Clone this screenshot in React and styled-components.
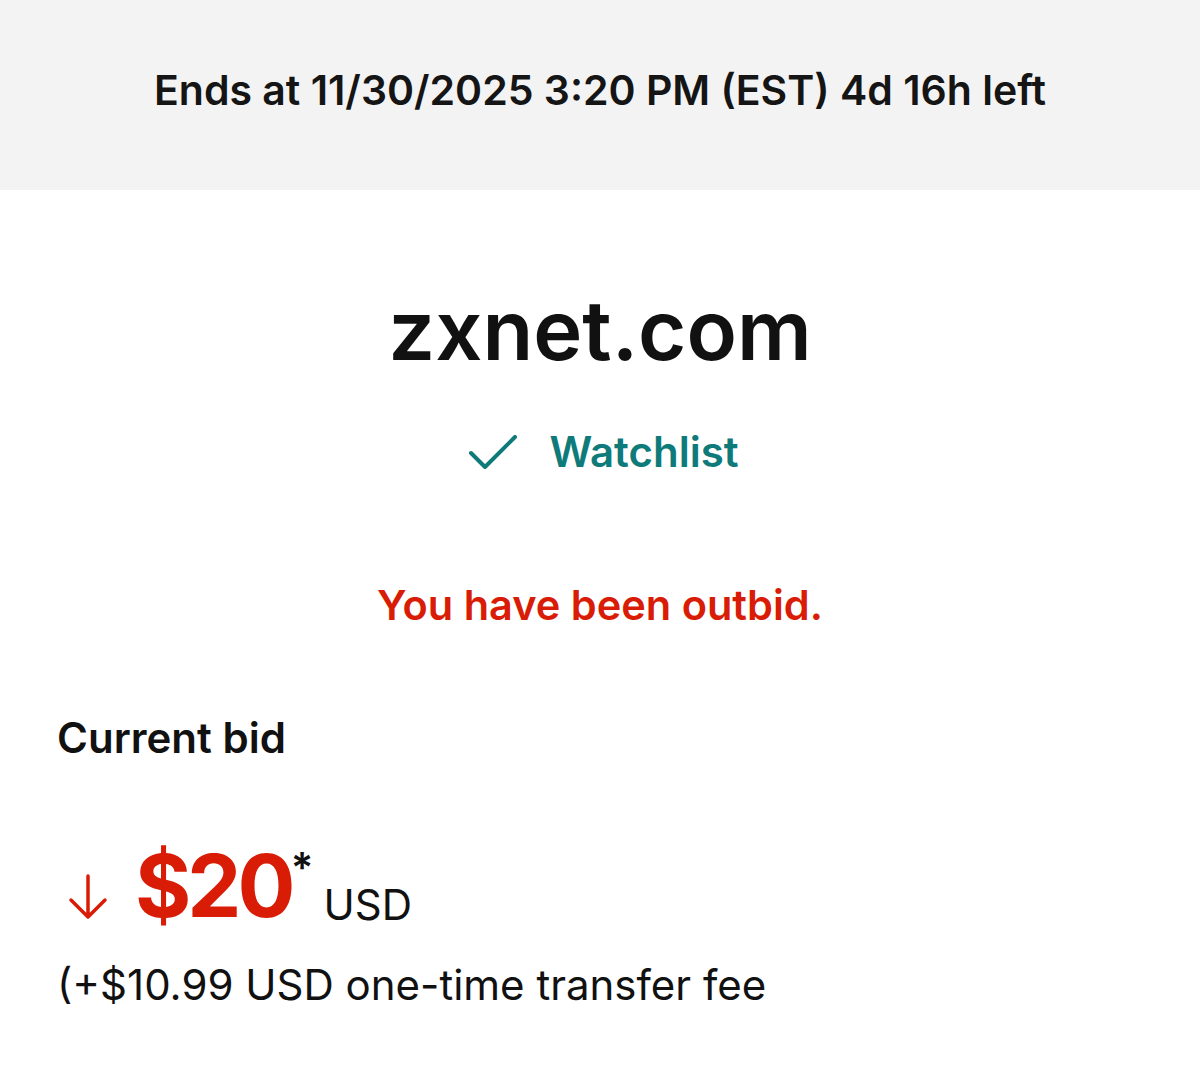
import React from "react";
import styled, { createGlobalStyle } from "styled-components";

const GlobalStyle = createGlobalStyle`
  body {
    margin: 0;
    background: #ffffff;
    font-family: Inter, "Noto Sans", sans-serif;
    color: #111111;
  }
`;

const Page = styled.div`
  width: 1200px;
  min-height: 1087px;
  background: #fff;
`;

const EndsBar = styled.div`
  height: 190px;
  background: #f3f3f3;
  display: flex;
  align-items: center;
  justify-content: center;
  padding-bottom: 10px;
  box-sizing: border-box;
`;

const EndsText = styled.div`
  font-size: 41px;
  font-weight: 600;
  color: #151515;
`;

const Body = styled.div`
  padding: 0 57px;
  display: flex;
  flex-direction: column;
`;

const Domain = styled.h1`
  margin: 98px 0 0;
  text-align: center;
  font-size: 83px;
  font-weight: 600;
  line-height: 84px;
  color: #111;
`;

const WatchRow = styled.div`
  margin-top: 55px;
  display: flex;
  align-items: center;
  justify-content: center;
  gap: 32px;
  color: #0e7a7a;
  font-size: 42px;
  font-weight: 600;
  line-height: 50px;
  padding-left: 8px;
`;

const Outbid = styled.div`
  margin-top: 103px;
  text-align: center;
  color: #d91c06;
  font-size: 41.5px;
  font-weight: 600;
  line-height: 50px;
`;

const Label = styled.div`
  margin-top: 83px;
  font-size: 42px;
  font-weight: 600;
  line-height: 50px;
  color: #111;
`;

const PriceRow = styled.div`
  margin-top: 75px;
  display: flex;
  align-items: flex-end;
  padding-left: 10px;
`;

const Arrow = styled.svg`
  width: 42px;
  height: 46px;
  margin-bottom: 14px;
  margin-right: 26px;
`;

const Amount = styled.span`
  position: relative;
  color: #d91c06;
  font-size: 86px;
  font-weight: 700;
  line-height: 96px;
  letter-spacing: -4px;
`;

const Star = styled.span`
  position: absolute;
  top: -18px;
  right: -22px;
  font-size: 42px;
  font-weight: 600;
  color: #111;
  letter-spacing: 0;
`;

const Currency = styled.span`
  margin-left: 32px;
  margin-bottom: 4px;
  font-size: 42px;
  font-weight: 400;
  line-height: 50px;
  color: #111;
`;

const Fee = styled.div`
  margin-top: 26px;
  font-size: 42px;
  font-weight: 400;
  line-height: 50px;
  color: #111;
`;

const Check = () => (
  <svg width="48" height="34" viewBox="0 0 48 34" fill="none">
    <path d="M2 18 L16 32 L46 2" stroke="#0e7a7a" strokeWidth="4" strokeLinecap="round" strokeLinejoin="round" />
  </svg>
);

export default function App() {
  return (
    <Page>
      <GlobalStyle />
      <EndsBar>
        <EndsText>Ends at 11/30/2025 3:20 PM (EST) 4d 16h left</EndsText>
      </EndsBar>
      <Body>
        <Domain>zxnet.com</Domain>
        <WatchRow>
          <Check />
          <span>Watchlist</span>
        </WatchRow>
        <Outbid>You have been outbid.</Outbid>
        <Label>Current bid</Label>
        <PriceRow>
          <Arrow viewBox="0 0 42 46" fill="none">
            <path d="M21 2 V42 M4 26 L21 43 L38 26" stroke="#d91c06" strokeWidth="3.5" strokeLinecap="round" strokeLinejoin="round" />
          </Arrow>
          <Amount>
            $20
            <Star>*</Star>
          </Amount>
          <Currency>USD</Currency>
        </PriceRow>
        <Fee>(+$10.99 USD one-time transfer fee</Fee>
      </Body>
    </Page>
  );
}
